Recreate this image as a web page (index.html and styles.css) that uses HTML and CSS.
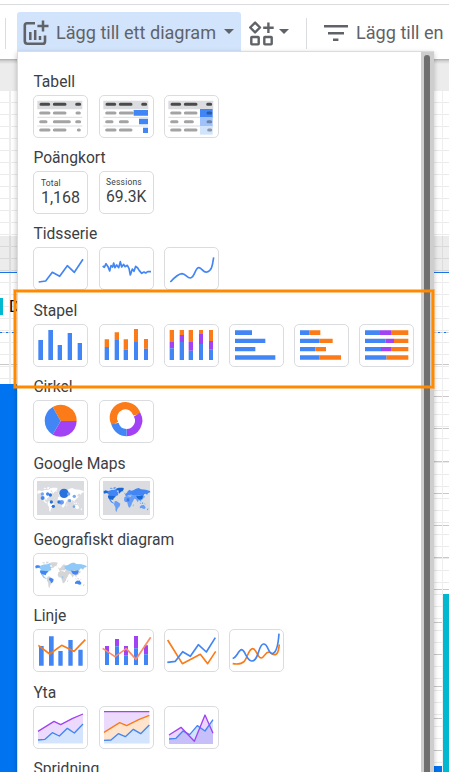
FILE: index.html
```html
<!DOCTYPE html>
<html lang="sv">
<head>
<meta charset="utf-8">
<title>Lägg till ett diagram</title>
<link rel="stylesheet" href="styles.css">
</head>
<body>
<svg class="defs" aria-hidden="true">
  <defs>
    <path id="north-america" d="M0 18l5-3 9 2 9-3 10-1 8-4 3 5-5 4 7 5-4 2 2 4-7 3-6 6-3 2 1 4-4-2-3 3 4 5 5 3-1 2-8-4-6-9-3-8 2-7-6-4-7 2-2-1z"/>
    <path id="usa" d="M13 31l15 1 8 1-6 6-2 5-4-2-8-2-3-5zM0 18l5-2 7 1v6l-7 0-3 1z"/>
    <path id="greenland" d="M38 10l7-3 13 0 3 3-4 7-6 3-3 5-3-4-1-6-5-2z"/>
    <path id="south-america" d="M33 48l5-1 6 4 6 4-2 8-5 5-3 6-1 6-3-3-1-12-4-7z"/>
    <path id="brazil" d="M39 51l5 1 6 4-2 7-5 4-2-6-4-4z"/>
    <path id="africa" d="M62 36l6-4 8 1 7 3 3 7 4 2-5 8-2 7-5 7-3-1-3-9-1-6-7-1-3-5z"/>
    <path id="europe" d="M64 30l1-5 4-2 4-6 5-4 4 3 0 10-2 5-5-1-3 1-4 1z"/>
    <path id="russia" d="M80 17l9-2 8-5 8-2 7 4 14 1 13 4 1 4-7 2-3 6-3-4-5 1-2 5-12-1-12 2-10-2-6-4z"/>
    <path id="asia" d="M82 30l16-1 20 0 3 4-3 8-6 4 1 5-4-3-3-4-4 8-5-9-5-2-2 4-5 1-5-8z"/>
    <path id="china" d="M97 31l9 1 11-2 1 4-3 7-7 2-7-4z"/>
    <path id="australia" d="M108 64l6-5 4 1 2-2 6 8-3 5-5-1-4-2-5 1z"/>
    <path id="islands" d="M107 50l4 3 3 3-3 0zM115 51l4 1-1 4-3-1zM121 54l6 3-4 0zM88 58l2-1-1 6-2 0zM122 31l2 4-4 4-1-2zM130 72l4-4-1 6-3 1zM62 22l3 1-2 4zM56 17l4 0-2 2zM18 8l6-1 4 3-7 1zM30 6l7-1-3 6-5-1z"/>
    <g id="table-rows">
      <path d="M3 30H138V56H3z" fill="#dadce0"/>
      <path d="M3 80H138M3 106H138" stroke="#dadce0" stroke-width="3"/>
    </g>
  </defs>
</svg>

<main class="canvas">
  <div class="ruler"></div>
  <div class="sheet">
    <div class="report-band"></div>
    <div class="report-title"><span class="swatch"></span><span>D</span></div>
    <div class="dashes"></div>
    <div class="panel-blue"></div>
    <div class="panel-teal"></div>
    <div class="panel-corner"></div>
  </div>
</main>

<header class="toolbar">
  <span class="divider"></span>
  <button class="tool add-chart">
    <svg width="26" height="26" viewBox="0 0 26 26" fill="none" stroke="#5f6368" stroke-width="2.6">
      <path d="M12 3.3H4Q1.8 3.3 1.8 5.5V21Q1.8 23.7 4.4 23.7H19.7Q22 23.7 22 21.4V15.5"/>
      <path d="M7.3 12V20M12.2 10V20M17 16V20" stroke-width="2.5"/>
      <path d="M20 0.5V11.5M14.4 6H25.5" stroke-width="2.5"/>
    </svg>
    <span class="tool-label">Lägg till ett diagram</span>
    <span class="caret"></span>
  </button>
  <button class="tool add-shape">
    <svg width="25" height="25" viewBox="0 0 25 25" fill="none" stroke="#5f6368" stroke-width="2.4">
      <path d="M6.1 1.6L11 6.5 6.1 11.4 1.2 6.5z" stroke-linejoin="round"/>
      <path d="M19.4 1.5V12M14.2 6.7H24.7"/>
      <rect x="2.3" y="16" width="7.4" height="7.4" rx=".6"/>
      <rect x="15.3" y="16" width="7.4" height="7.4" rx=".6"/>
    </svg>
    <span class="caret"></span>
  </button>
  <span class="divider second"></span>
  <button class="tool add-control">
    <svg width="24" height="17" viewBox="0 0 24 17" fill="#5f6368">
      <path d="M0 0H24V2.6H0zM4 7H20V9.6H4zM9 13.4H14.4V16H9z"/>
    </svg>
    <span class="tool-label">Lägg till en</span>
  </button>
</header>

<div class="menu">
  <div class="menu-list">
    <section class="group">
      <h2>Tabell</h2>
      <div class="cards">
        <div class="card"><svg viewBox="99 285 165 129">
          <use href="#table-rows" x="109" y="272"/>
          <path d="M123 313H146M163 313H195M230 313H239" class="pill dark"/>
          <path d="M122 339H147M163 339H195M231 339H238M122 365H138M163 365H208M230 365H239M122 390H147M163 390H195M235 390H238" class="pill"/>
        </svg></div>
        <div class="card"><svg viewBox="297 285 165 129">
          <use href="#table-rows" x="307" y="272"/>
          <path d="M321 313H344M361 313H393M428 313H437" class="pill dark"/>
          <path d="M320 339H345M361 339H397M320 365H336M361 365H382M320 390H345M361 390H393" class="pill"/>
          <path d="M401 330H444V347H401zM417 356H444V373H417zM429 383H444V399H429z" fill="#4285f4"/>
        </svg></div>
        <div class="card"><svg viewBox="492 285 165 129">
          <use href="#table-rows" x="502" y="272"/>
          <path d="M600 327H638V352H600z" fill="#4285f4"/>
          <path d="M600 352H638V378H600z" fill="#a0c2fa"/>
          <path d="M600 378H638V404H600z" fill="#d2e3fc"/>
          <path d="M516 313H539M556 313H588M623 313H632" class="pill dark"/>
          <path d="M515 339H540M556 339H588M515 365H531M556 365H577M515 390H540M556 390H588" class="pill"/>
          <path d="M624 339H632" class="pill heat-high"/>
          <path d="M624 365H632" class="pill heat-mid"/>
          <path d="M626 390H632" class="pill heat-low"/>
        </svg></div>
      </div>
    </section>

    <section class="group">
      <h2>Poängkort</h2>
      <div class="cards">
        <div class="card score"><small>Total</small><b>1,168</b></div>
        <div class="card score upper"><small>Sessions</small><b>69.3K</b></div>
      </div>
    </section>

    <section class="group">
      <h2>Tidsserie</h2>
      <div class="cards">
        <div class="card"><svg viewBox="99 306 165 129"><path class="line" d="M116 411L137 408 157 382 179 394 202 362 223 382 249 343"/></svg></div>
        <div class="card"><svg viewBox="297 306 165 129"><path class="line" d="M308 363L313 367 318 356 324 365 329 378 333 362 338 366 341 354 345 368 350 360 356 368 361 350 365 366 371 358 375 365 382 361 387 370 391 390 397 372 402 379 407 364 413 369 418 377 425 385 432 381 437 384 443 380 453 380"/></svg></div>
        <div class="card"><svg viewBox="492 306 165 129"><path class="line" d="M511 411C522 399 533 387 546 386C557 387 561 399 571 399C585 397 585 367 597 368C606 369 610 384 621 381C637 377 638 355 641 337"/></svg></div>
      </div>
    </section>

    <section class="group">
      <h2>Stapel</h2>
      <div class="cards">
        <div class="card"><svg viewBox="99 117 165 129" fill="#4285f4"><path d="M115 165H129V225H115zM145 135H159V225H145zM173 180H186V225H173zM203 144H216V225H203zM233 174H246V225H233z"/></svg></div>
        <div class="card"><svg viewBox="297 117 165 129">
          <path fill="#fa7b17" d="M314 163H327V186H314zM344 142H357V165H344zM371 163H384V194H371zM402 132H414V171H402zM432 162H444V191H432z"/>
          <path fill="#4285f4" d="M314 186H327V225H314zM344 165H357V225H344zM371 194H384V225H371zM402 171H414V225H402zM432 191H444V225H432z"/>
        </svg></div>
        <div class="card"><svg viewBox="492 117 165 129">
          <path fill="#fa7b17" d="M509 135H522V171H509zM539 135H552V150H539zM566 135H579V171H566zM597 135H609V147H597zM627 135H639V168H627z"/>
          <path fill="#a142f4" d="M509 171H522V190H509zM539 150H552V171H539zM566 171H579V197H566zM597 147H609V177H597zM627 168H639V194H627z"/>
          <path fill="#4285f4" d="M509 190H522V225H509zM539 171H552V225H539zM566 197H579V225H566zM597 177H609V225H597zM627 194H639V225H627z"/>
        </svg></div>
        <div class="card"><svg viewBox="15 117 165 129" fill="#4285f4"><path d="M33 136H84V150H33zM33 161H124V174H33zM33 186H94V199H33zM33 211H154V224H33z"/></svg></div>
        <div class="card"><svg viewBox="210 117 165 129">
          <path fill="#4285f4" d="M228 136H257V150H228zM228 161H287V174H228zM228 186H274V199H228zM228 211H287V224H228z"/>
          <path fill="#fa7b17" d="M257 136H289V150H257zM287 161H326V174H287zM274 186H306V199H274zM287 211H351V224H287z"/>
        </svg></div>
        <div class="card"><svg viewBox="405 117 165 129">
          <path fill="#fa7b17" d="M501 136H553V150H501zM510 161H553V174H510zM501 186H553V199H501zM487 211H553V224H487z"/>
          <path fill="#a142f4" d="M468 136H501V150H468zM484 161H510V174H484zM471 186H501V199H471z"/>
          <path fill="#4285f4" d="M423 136H468V150H423zM423 161H484V174H423zM423 186H471V199H423zM423 211H487V224H423z"/>
        </svg></div>
      </div>
    </section>

    <section class="group">
      <h2>Cirkel</h2>
      <div class="cards">
        <div class="card"><svg viewBox="99 30 165 129">
          <path fill="#fa7b17" d="M182 93L158 51A48 48 0 0 1 230 93z"/>
          <path fill="#a142f4" d="M182 93H230A48 48 0 0 1 158 134z"/>
          <path fill="#4285f4" d="M182 93L158 134A48 48 0 0 1 158 51z"/>
        </svg></div>
        <div class="card"><svg viewBox="297 30 165 129" fill="none" stroke-width="22">
          <path stroke="#fa7b17" d="M345 101A36 36 0 1 1 411 74"/>
          <path stroke="#a142f4" d="M411 74A36 36 0 0 1 380 128"/>
          <path stroke="#4285f4" d="M380 128A36 36 0 0 1 345 101"/>
        </svg></div>
      </div>
    </section>

    <section class="group">
      <h2>Google Maps</h2>
      <div class="cards">
        <div class="card"><svg viewBox="99 261 165 129">
          <path fill="#dadce0" d="M111 273H252V375H111z"/>
          <g fill="#fff" transform="translate(112 286)">
            <use href="#north-america"/><use href="#greenland"/><use href="#south-america"/><use href="#africa"/><use href="#europe"/><use href="#russia"/><use href="#asia"/><use href="#australia"/><use href="#islands"/>
          </g>
          <g fill="#2b73dc"><circle cx="192" cy="310" r="14"/><circle cx="151" cy="315" r="5"/><circle cx="154" cy="336" r="5"/><circle cx="160" cy="349" r="5"/><circle cx="177" cy="336" r="5"/></g>
          <g fill="#4285f4"><circle cx="128" cy="324" r="6"/><circle cx="143" cy="312" r="5"/><circle cx="185" cy="337" r="7" opacity=".8"/></g>
          <g fill="#76a7f5"><circle cx="127" cy="312" r="5"/><circle cx="209" cy="332" r="5"/><circle cx="223" cy="319" r="5"/><circle cx="222" cy="350" r="4"/><circle cx="206" cy="312" r="5"/></g>
        </svg></div>
        <div class="card"><svg viewBox="297 261 165 129">
          <path fill="#dadce0" d="M309 273H450V375H309z"/>
          <g fill="#669df6" transform="translate(311 286)">
            <use href="#north-america" fill="#4285f4"/><use href="#usa" fill="#1967d2"/><use href="#greenland" fill="#1967d2"/><use href="#south-america"/><use href="#africa"/><path d="M69 39h8v9h-8z" fill="#3579e8"/><use href="#europe" fill="#4c8bf5"/><use href="#russia" fill="#4285f4"/><use href="#asia"/><use href="#china" fill="#1967d2"/><use href="#australia"/><use href="#islands"/>
          </g>
        </svg></div>
      </div>
    </section>

    <section class="group">
      <h2>Geografiskt diagram</h2>
      <div class="cards">
        <div class="card"><svg viewBox="99 84 165 129">
          <g fill="#d5d5d5" transform="translate(106 104) scale(1.1 1.06)">
            <use href="#north-america" fill="#90c8f7"/><use href="#usa" fill="#4285f4"/><use href="#greenland"/><use href="#south-america"/><use href="#brazil" fill="#4285f4"/><use href="#africa"/><path d="M72 47h4v6h-4z" fill="#90c8f7"/><use href="#europe"/><use href="#asia"/><use href="#russia" fill="#90c8f7"/><use href="#china" fill="#4285f4"/><use href="#australia" fill="#4285f4"/><use href="#islands"/>
          </g>
        </svg></div>
      </div>
    </section>

    <section class="group">
      <h2>Linje</h2>
      <div class="cards">
        <div class="card"><svg viewBox="99 312 165 129">
          <path fill="#4285f4" d="M117 363H131V422H117zM147 334H161V422H147zM175 378H188V422H175zM205 345H218V422H205zM235 374H248V422H235z"/>
          <path class="line orange" d="M115 361L149 387 185 361 222 379 256 344"/>
        </svg></div>
        <div class="card"><svg viewBox="297 312 165 129">
          <path fill="#a142f4" d="M315 363H327V381H315zM345 342H357V364H345zM372 363H384V391H372zM402 333H414V370H402zM432 361H444V388H432z"/>
          <path fill="#4285f4" d="M315 381H327V420H315zM345 364H357V420H345zM372 391H384V420H372zM402 370H414V420H402zM432 388H444V420H432z"/>
          <path class="line coral" d="M308 370L345 395 379 371 408 403 452 337"/>
        </svg></div>
        <div class="card"><svg viewBox="492 312 165 129">
          <path class="line orange" d="M503 345L547 416 601 388 623 416 647 379"/>
          <path class="line" d="M502 412L526 409 548 380 571 394 595 359 619 381 646 338"/>
        </svg></div>
        <div class="card"><svg viewBox="27 57 165 129">
          <path class="line orange" d="M38 161C52 163 64 163 72 155C82 145 86 116 98 116C110 116 112 144 124 144C134 142 135 126 147 126C154 127 156 136 166 134C177 130 176 115 178 103"/>
          <path class="line" d="M38 145C50 144 55 120 65 119C76 121 79 151 95 153C117 153 114 105 130 102C146 101 142 130 157 131C171 129 175 99 177 71"/>
        </svg></div>
      </div>
    </section>

    <section class="group">
      <h2>Yta</h2>
      <div class="cards">
        <div class="card"><svg viewBox="99 108 165 129">
          <path fill="#ecdafc" d="M114 184L162 154 182 164 218 145 249 132V220H114z"/>
          <path fill="#d4e4fc" d="M114 210L135 208 157 188 178 198 202 175 223 189 249 162V220H114z"/>
          <path class="line thin purple" d="M114 184L162 154 182 164 218 145 249 132"/>
          <path class="line thin" d="M114 210L135 208 157 188 178 198 202 175 223 189 249 162"/>
        </svg></div>
        <div class="card"><svg viewBox="297 108 165 129">
          <path fill="#ecdafc" d="M312 124H448V220H312z"/>
          <path fill="#fee3cd" d="M312 187L359 158 380 167 416 149 448 136V220H312z"/>
          <path fill="#d4e4fc" d="M312 211L333 210 355 191 376 200 400 178 422 191 448 165V220H312z"/>
          <path class="line thin purple" d="M312 125H448"/>
          <path class="line thin orange" d="M312 187L359 158 380 167 416 149 448 136"/>
          <path class="line thin" d="M312 211L333 210 355 191 376 200 400 178 422 191 448 165"/>
        </svg></div>
        <div class="card"><svg viewBox="492 108 165 129">
          <path fill="#d2e3fc" d="M507 207L528 205 549 183 569 194 592 167 615 183 639 149V222H507z"/>
          <path fill="#a142f4" fill-opacity=".22" d="M507 195L543 172 583 214 615 135 639 190V222H507z"/>
          <path class="line thin" d="M507 207L528 205 549 183 569 194 592 167 615 183 639 149"/>
          <path class="line thin purple" d="M507 195L543 172 583 214 615 135 639 190"/>
        </svg></div>
      </div>
    </section>

    <section class="group">
      <h2>Spridning</h2>
    </section>
  </div>
  <div class="scrollbar"><div class="thumb"></div></div>
</div>
<div class="highlight"></div>
</body>
</html>
```
FILE: styles.css
```css
* { box-sizing: border-box; }

body {
  margin: 0;
  height: 772px;
  position: relative;
  overflow: hidden;
  background: #fff;
  font-family: Roboto, "Liberation Sans", sans-serif;
}

.defs { position: absolute; width: 0; height: 0; }

/* Toolbar */
.toolbar {
  position: absolute;
  inset: 0 0 auto 0;
  height: 59px;
  padding: 12px 0 0 5px;
  display: flex;
  align-items: flex-start;
  overflow: hidden;
  background: linear-gradient(#dadce0, #dadce0) 0 4px / 100% 1px no-repeat #fff;
}

.divider {
  flex: none;
  width: 1px;
  height: 31px;
  margin-top: 6px;
  background: #dadce0;
}

.divider.second { margin-left: 17px; }

.tool {
  flex: none;
  display: flex;
  align-items: center;
  height: 39px;
  padding: 0;
  border: 0;
  background: none;
  color: #5f6368;
  font: 18.1px/36px Roboto, "Liberation Sans", sans-serif;
  white-space: nowrap;
}

.tool svg { flex: none; }

.add-chart {
  width: 224px;
  margin-left: 11px;
  padding: 3px 7px 0 6px;
  border-radius: 3px 3px 0 0;
  background: #d2e3fc;
}

.add-chart svg { margin-right: 7px; }

.add-chart .caret { margin-left: auto; }

.add-shape { margin-left: 8px; padding-top: 3px; }
.add-shape .caret { margin-left: 5px; }

.add-control { margin-left: 17px; padding-top: 3px; }
.add-control svg { margin-right: 8px; }

.caret {
  border: 5px solid transparent;
  border-top-color: #5f6368;
  border-bottom: 0;
  margin-bottom: 3px;
}

/* Report canvas behind the menu */
.canvas { height: 772px; padding-top: 59px; overflow: hidden; }

.ruler {
  height: 32px;
  background: linear-gradient(#aaa, #d2d2d2 2px, #ececec 5px);
}

.sheet {
  position: relative;
  height: 681px;
  background:
    linear-gradient(#ededed, #ededed) 9px 0 / 2px 100% no-repeat,
    linear-gradient(#efefef, #efefef) 442px 0 / 1px 100% no-repeat,
    repeating-linear-gradient(#c9c9c9 0 1px, transparent 1px 32.2px) 0 273px / 100% 100% no-repeat,
    repeating-linear-gradient(transparent 0 11px, #ebebeb 11px 12px) #fff;
}

.report-band {
  position: absolute;
  inset: 145px 0 auto 0;
  height: 37px;
  border-bottom: 1px solid #1a73e8;
  background: rgba(0, 0, 0, .075);
}

.report-title {
  position: absolute;
  top: 207px;
  left: 0;
  display: flex;
  gap: 6px;
  font-size: 16px;
  line-height: 18px;
  color: #000;
}

.swatch { width: 3px; height: 17px; background: #00b8d0; }

.dashes {
  position: absolute;
  inset: 241px 0 auto 0;
  height: 1px;
  background: repeating-linear-gradient(90deg, #1a73e8 0 2px, #b9cdea 2px 4px, #ddd 4px 6px);
}

.panel-blue {
  position: absolute;
  top: 293px;
  left: 0;
  width: 20px;
  height: 388px;
  background: #0073f0;
}

.panel-teal {
  position: absolute;
  top: 503px;
  left: 443px;
  width: 6px;
  height: 178px;
  background: #00b8d0;
}

.panel-corner {
  position: absolute;
  top: 675px;
  left: 430px;
  width: 12px;
  height: 6px;
  background: #0073f0;
}

/* Chart menu */
.menu {
  position: absolute;
  top: 51px;
  left: 17px;
  width: 417px;
  height: 730px;
  display: flex;
  border: 1px solid #dadce0;
  border-width: 1px 0 0 1px;
  background: #fff;
  box-shadow: 0 2px 5px rgba(0, 0, 0, .25);
}

.menu-list {
  flex: 1;
  padding: 18.75px 0 0 15.4px;
  overflow: hidden;
}

.group { height: 76.37px; }

.group h2 {
  height: 24px;
  margin: 0;
  color: #3c4043;
  font-size: 15.65px;
  font-weight: 400;
  line-height: 21px;
  white-space: nowrap;
}

.cards { display: flex; gap: 10.15px; }

.card {
  flex: none;
  position: relative;
  width: 55px;
  height: 43px;
  border: 1px solid #dadce0;
  border-radius: 5px;
  background: #fff;
}

.card svg {
  display: block;
  width: 55px;
  height: 43px;
  margin: -1px;
}

.score {
  display: flex;
  flex-direction: column;
  padding: 5px 0 0 6.5px;
  color: #3c4043;
}

.score.upper { padding-top: 4px; }

.score small { font-size: 8.5px; line-height: 12px; letter-spacing: .2px; }

.score b {
  font-size: 16px;
  font-weight: 400;
  line-height: 18px;
}

.score.upper b { font-size: 15.7px; }

.pill {
  fill: none;
  stroke: #a3a3a3;
  stroke-width: 9;
  stroke-linecap: round;
}

.pill.dark { stroke: #4a4a4a; }
.pill.heat-high { stroke: #2c5ba8; }
.pill.heat-mid { stroke: #6b83aa; }
.pill.heat-low { stroke: #8d99aa; }

.line {
  fill: none;
  stroke: #4285f4;
  stroke-width: 5;
  stroke-linejoin: round;
}

.line.thin { stroke-width: 4; }
.line.orange { stroke: #fa7b17; }
.line.coral { stroke: #ff8a65; }
.line.purple { stroke: #a142f4; }

.scrollbar {
  flex: none;
  width: 13px;
  padding: 3px 4px 0 3px;
  background: #cecece;
}

.thumb {
  height: 740px;
  border-radius: 3px 3px 0 0;
  background: #6f6f6f;
}

.highlight {
  position: absolute;
  top: 290px;
  left: 14px;
  width: 420px;
  height: 98px;
  border: 2px solid #ff8a00;
  box-shadow: 0 0 0 1px rgba(255, 138, 0, .5), inset 0 0 0 1px rgba(255, 138, 0, .5);
}
```
